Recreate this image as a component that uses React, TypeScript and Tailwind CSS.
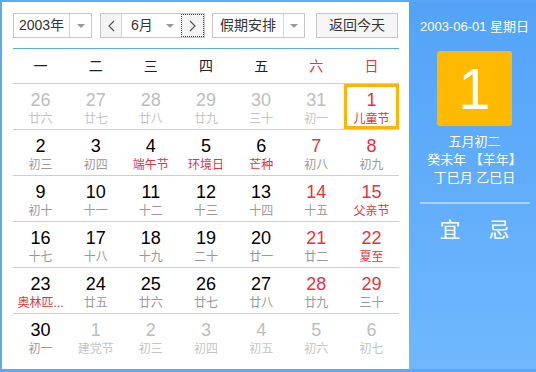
import React from 'react';

type Day = {
    n: number;
    lunar: string;
    other?: boolean;
    fest?: boolean;
    weekend?: boolean;
    selected?: boolean;
};

const WEEKDAYS = ['一', '二', '三', '四', '五', '六', '日'];

const DAYS: Day[] = [
    { n: 26, lunar: '廿六', other: true },
    { n: 27, lunar: '廿七', other: true },
    { n: 28, lunar: '廿八', other: true },
    { n: 29, lunar: '廿九', other: true },
    { n: 30, lunar: '三十', other: true },
    { n: 31, lunar: '初一', other: true },
    { n: 1, lunar: '儿童节', fest: true, weekend: true, selected: true },
    { n: 2, lunar: '初三' },
    { n: 3, lunar: '初四' },
    { n: 4, lunar: '端午节', fest: true },
    { n: 5, lunar: '环境日', fest: true },
    { n: 6, lunar: '芒种', fest: true },
    { n: 7, lunar: '初八', weekend: true },
    { n: 8, lunar: '初九', weekend: true },
    { n: 9, lunar: '初十' },
    { n: 10, lunar: '十一' },
    { n: 11, lunar: '十二' },
    { n: 12, lunar: '十三' },
    { n: 13, lunar: '十四' },
    { n: 14, lunar: '十五', weekend: true },
    { n: 15, lunar: '父亲节', fest: true, weekend: true },
    { n: 16, lunar: '十七' },
    { n: 17, lunar: '十八' },
    { n: 18, lunar: '十九' },
    { n: 19, lunar: '二十' },
    { n: 20, lunar: '廿一' },
    { n: 21, lunar: '廿二', weekend: true },
    { n: 22, lunar: '夏至', fest: true, weekend: true },
    { n: 23, lunar: '奥林匹...', fest: true },
    { n: 24, lunar: '廿五' },
    { n: 25, lunar: '廿六' },
    { n: 26, lunar: '廿七' },
    { n: 27, lunar: '廿八' },
    { n: 28, lunar: '廿九', weekend: true },
    { n: 29, lunar: '三十', weekend: true },
    { n: 30, lunar: '初一' },
    { n: 1, lunar: '建党节', other: true },
    { n: 2, lunar: '初三', other: true },
    { n: 3, lunar: '初四', other: true },
    { n: 4, lunar: '初五', other: true },
    { n: 5, lunar: '初六', other: true },
    { n: 6, lunar: '初七', other: true },
];

const FONT = { fontFamily: '"Liberation Sans", "Noto Sans CJK SC", sans-serif' };

function Caret() {
    return <span className="block w-0 h-0 border-x-[4px] border-x-transparent border-t-[4px] border-t-[#999]" />;
}

function Select({ label, width, textWidth }: { label: string; width: string; textWidth: string }) {
    return (
        <div className={`flex h-[25px] border border-[#c6c6c6] bg-white ${width}`}>
            <div className={`flex items-center justify-center border-r border-[#d6d6d6] text-[14px] text-[#333] ${textWidth}`}>
                {label}
            </div>
            <div className="flex flex-1 items-center justify-center">
                <Caret />
            </div>
        </div>
    );
}

function Cell({ d }: { d: Day }) {
    const numColor = d.other ? 'text-[#bdbdbd]' : d.weekend ? 'text-[#e8323c]' : 'text-black';
    const lunarColor = d.other ? 'text-[#c4c4c4]' : d.fest ? 'text-[#e8323c]' : 'text-[#999]';
    return (
        <div
            className={`flex h-[45px] flex-col items-center justify-center pt-[3px] ${
                d.selected ? 'border-[3px] border-[#ffb400]' : ''
            }`}
        >
            <div className={`text-[18px] leading-[20px] ${numColor}`}>{d.n}</div>
            <div className={`mt-[1px] text-[12px] leading-[16px] ${lunarColor}`}>{d.lunar}</div>
        </div>
    );
}

export default function App() {
    const rows: Day[][] = [];
    for (let i = 0; i < DAYS.length; i += 7) rows.push(DAYS.slice(i, i + 7));

    return (
        <div className="flex h-[372px] w-[536px] border-l-2 border-t-2 border-b-[3px] border-[#5ba8f8] bg-white" style={FONT}>
            {/* Left: calendar */}
            <div className="w-[407px] pl-[11px] pr-[10px] pt-[11px]">
                <div className="flex items-center">
                    <Select label="2003年" width="w-[79px]" textWidth="w-[56px]" />

                    <div className="ml-[8px] flex h-[25px] w-[105px] border border-[#c6c6c6]">
                        <div className="flex w-[21px] items-center justify-center border-r border-[#d6d6d6] bg-[#f4f4f4] text-[#555]">
                            <svg width="7" height="12" viewBox="0 0 7 12">
                                <path d="M6 1L1 6l5 5" fill="none" stroke="#555" strokeWidth="1.2" />
                            </svg>
                        </div>
                        <div className="flex flex-1 items-center justify-between pl-[9px] pr-[7px] text-[14px] text-[#333]">
                            <span>6月</span>
                            <Caret />
                        </div>
                        <div className="flex w-[23px] items-center justify-center border border-dotted border-[#444] bg-[#f4f4f4]">
                            <svg width="7" height="12" viewBox="0 0 7 12">
                                <path d="M1 1l5 5-5 5" fill="none" stroke="#555" strokeWidth="1.2" />
                            </svg>
                        </div>
                    </div>

                    <div className="ml-[7px]">
                        <Select label="假期安排" width="w-[93px]" textWidth="w-[71px]" />
                    </div>

                    <button className="ml-[11px] flex h-[25px] w-[82px] items-center justify-center border border-[#c6c6c6] bg-[#f5f5f5] text-[14px] text-[#333]">
                        返回今天
                    </button>
                </div>

                <div className="mt-[10px] border-t border-[#5ba8f8]" />

                <div className="grid h-[35px] grid-cols-7 items-center border-b border-[#cfcfcf] text-[14px]">
                    {WEEKDAYS.map((w, i) => (
                        <div key={w} className={`text-center ${i >= 5 ? 'text-[#e8323c]' : 'text-[#222]'}`}>
                            {w}
                        </div>
                    ))}
                </div>

                {rows.map((r, ri) => (
                    <div
                        key={ri}
                        className={`grid grid-cols-7 ${ri < rows.length - 1 ? 'border-b border-[#cfcfcf]' : ''}`}
                    >
                        {r.map((d, i) => (
                            <Cell key={i} d={d} />
                        ))}
                    </div>
                ))}
            </div>

            {/* Right: today panel */}
            <div className="flex flex-1 flex-col items-center bg-gradient-to-b from-[#52a3f8] to-[#70b7fd] pl-[4px] pt-[17px] text-white">
                <div className="text-[13px] leading-[16px]">2003-06-01 星期日</div>
                <div className="mt-[16px] flex h-[75px] w-[75px] items-center justify-center rounded-[3px] bg-[#ffba00] text-[58px] font-light leading-none">
                    1
                </div>
                <div className="mt-[7px] text-[13px] leading-[18px]">五月初二</div>
                <div className="text-[13px] leading-[18px]">癸未年 【羊年】</div>
                <div className="text-[13px] leading-[18px]">丁巳月 乙巳日</div>
                <div className="mt-[15px] h-[2px] w-[110px] bg-[#a9d1fc]" />
                <div className="mt-[14px] flex gap-[28px] text-[21px] leading-[24px]">
                    <span>宜</span>
                    <span>忌</span>
                </div>
            </div>
        </div>
    );
}
